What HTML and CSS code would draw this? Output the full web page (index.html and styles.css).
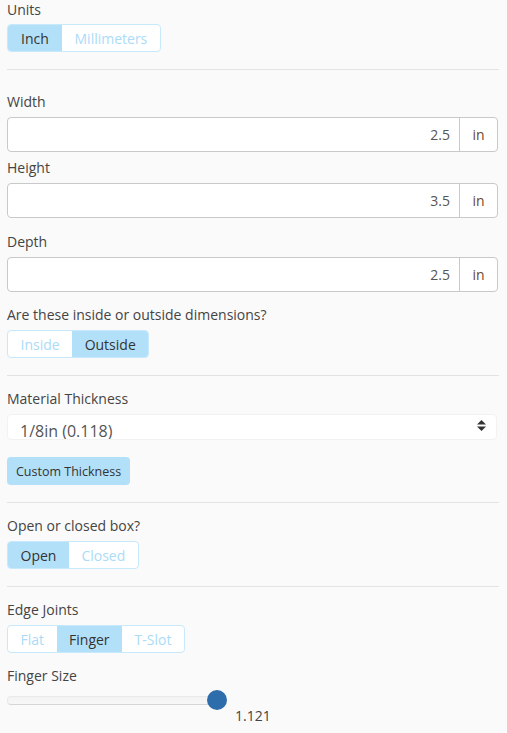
FILE: index.html
```html
<!DOCTYPE html>
<html>
<head>
<meta charset="utf-8">
<link rel="stylesheet" href="styles.css">
</head>
<body>
<div class="panel">
  <div class="label first">Units</div>
  <div class="toggle t-units">
    <span class="seg on">Inch</span><span class="seg">Millimeters</span>
  </div>
  <hr class="rule r1">

  <div class="label l-width">Width</div>
  <div class="ingroup">
    <div class="inval">2.5</div><div class="addon">in</div>
  </div>
  <div class="label l-height">Height</div>
  <div class="ingroup">
    <div class="inval">3.5</div><div class="addon">in</div>
  </div>
  <div class="label l-depth">Depth</div>
  <div class="ingroup">
    <div class="inval">2.5</div><div class="addon">in</div>
  </div>

  <div class="label l-q">Are these inside or outside dimensions?</div>
  <div class="toggle">
    <span class="seg">Inside</span><span class="seg on">Outside</span>
  </div>
  <hr class="rule">

  <div class="label l-sec">Material Thickness</div>
  <div class="select">
    <span class="seltext">1/8in (0.118)</span>
    <svg class="arrows" width="9" height="11" viewBox="0 0 9 11"><path d="M4.5 0 L9 4.5 H0 Z M0 6.5 H9 L4.5 11 Z" fill="#333"/></svg>
  </div>
  <div class="btn">Custom Thickness</div>
  <hr class="rule">

  <div class="label l-sec">Open or closed box?</div>
  <div class="toggle">
    <span class="seg on">Open</span><span class="seg">Closed</span>
  </div>
  <hr class="rule">

  <div class="label l-sec">Edge Joints</div>
  <div class="toggle">
    <span class="seg">Flat</span><span class="seg on">Finger</span><span class="seg">T-Slot</span>
  </div>
  <div class="label l-finger">Finger Size</div>
  <div class="slider">
    <div class="track"></div>
    <div class="thumb"></div>
  </div>
  <div class="slval">1.121</div>
</div>
</body>
</html>
```
FILE: styles.css
```css
html, body {
  margin: 0;
  padding: 0;
  background: #fafafa;
}
body {
  font-family: "Open Sans", "Liberation Sans", sans-serif;
  font-size: 14px;
  color: #444;
}
.panel {
  width: 492px;
  padding: 0 0 0 7px;
}
.label {
  line-height: 20px;
  height: 20px;
  margin-bottom: 5px;
}
.label.first { margin-top: 0; margin-bottom: 4px; }
.l-width { margin-top: 22px; }
.l-height { margin-top: 6px; }
.l-depth { margin-top: 14px; }
.l-q { margin-top: 13px; }
.l-sec { margin-top: 13px; }
.l-finger { margin-top: 13px; margin-bottom: 0; }

.toggle {
  display: inline-flex;
  height: 28px;
  box-sizing: border-box;
  border: 1px solid #c8e9fb;
  border-radius: 4px;
  overflow: hidden;
  background: #fff;
  vertical-align: top;
}
.toggle .seg {
  display: flex;
  align-items: center;
  padding: 0 12.5px;
  color: #abdbf7;
}
.toggle .seg.on {
  background: #b3e0f9;
  color: #333;
}
.toggle + .rule, .btn + .rule { margin-top: 17px; }
.t-units { display: flex; width: 154px; }
.t-units .seg:first-child { width: 54px; box-sizing: border-box; justify-content: center; padding: 0; }

.rule {
  border: 0;
  border-top: 1px solid #e3e3e3;
  margin: 17px 0 0 0;
  height: 0;
}

.ingroup {
  display: flex;
  height: 35px;
  width: 491px;
  box-sizing: border-box;
  border: 1px solid #c9c9c9;
  border-radius: 4px;
  background: #fff;
}
.inval {
  flex: 1;
  text-align: right;
  padding-right: 9px;
  line-height: 33px;
  color: #555;
}
.addon {
  width: 37px;
  border-left: 1px solid #c9c9c9;
  text-align: center;
  line-height: 33px;
  color: #6b4a30;
}

.select {
  display: flex;
  align-items: flex-start;
  justify-content: space-between;
  width: 490px;
  height: 26px;
  box-sizing: border-box;
  border: 1px solid #f2f2f2;
  border-radius: 4px;
  background: #fff;
  overflow: hidden;
  padding: 0 10px 0 12px;
}
.seltext {
  font-size: 16px;
  line-height: 22px;
  margin-top: 5px;
  color: #555;
}
.arrows { margin-top: 5px; }

.btn {
  display: inline-flex;
  align-items: center;
  margin-top: 17px;
  height: 28px;
  padding: 0 9px;
  background: #b3e0f9;
  border-radius: 4px;
  font-size: 12.5px;
  color: #333;
}

.slider {
  position: relative;
  width: 220px;
  height: 24px;
  margin-top: 4px;
}
.track {
  position: absolute;
  left: 0;
  top: 6px;
  width: 215px;
  height: 9px;
  box-sizing: border-box;
  border-radius: 4px;
  background: linear-gradient(#f3f3f3, #f7f7f7);
  border: 1px solid #e9e9e9;
  border-bottom-color: #d6d6d6;
}
.thumb {
  position: absolute;
  left: 200px;
  top: 0;
  width: 20px;
  height: 20px;
  border-radius: 50%;
  background: #2e6dab;
}
.slval {
  margin-left: 228px;
  margin-top: -8px;
  line-height: 20px;
  color: #444;
}
```
